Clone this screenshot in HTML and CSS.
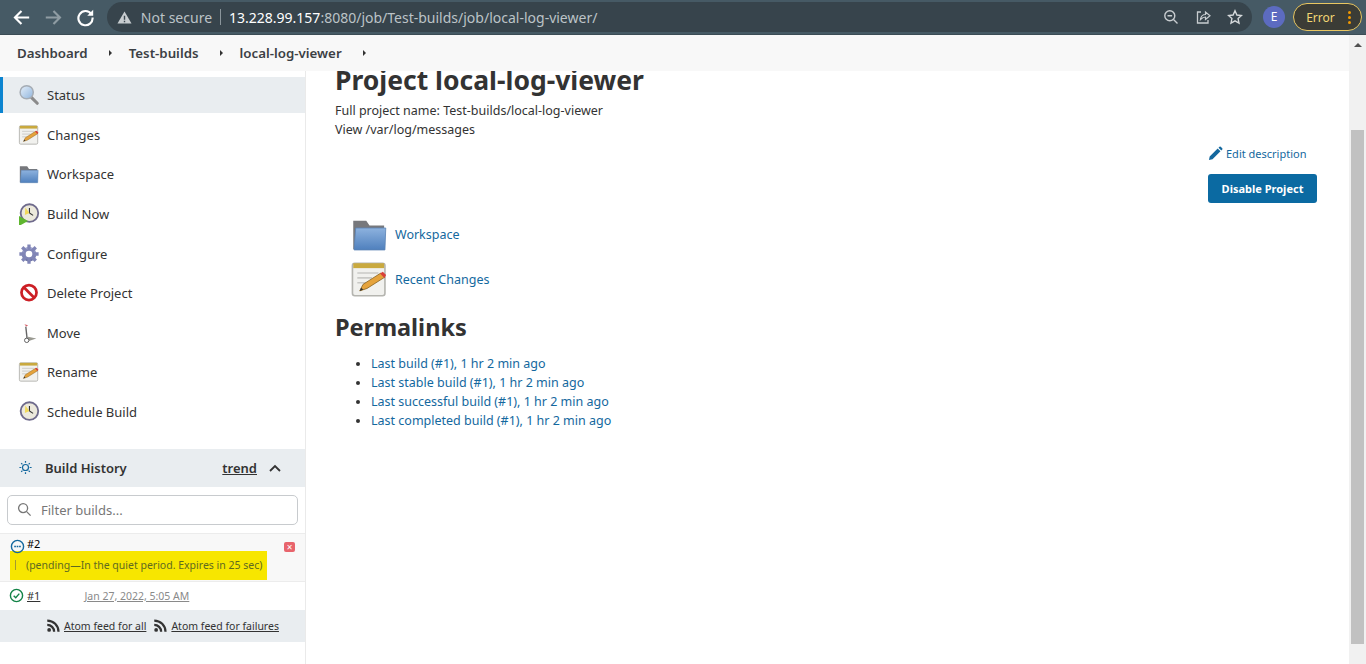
FILE: index.html
```html
<!DOCTYPE html>
<html lang="en">
<head>
    <meta charset="UTF-8">
    <meta name="viewport" content="width=device-width, initial-scale=1.0">
    <title>local-log-viewer [Jenkins]</title>
    <link rel="stylesheet" href="styles.css">
</head>
<body>
    <svg class="icon-defs" width="0" height="0">
        <defs>
            <linearGradient id="folderBlue" x1="0" y1="0" x2="0" y2="1"><stop offset="0" stop-color="#8db2de"/><stop offset="1" stop-color="#4f80bd"/></linearGradient>
            <linearGradient id="lensBlue" x1="0" y1="0" x2="1" y2="1"><stop offset="0" stop-color="#e6f0fa"/><stop offset="1" stop-color="#8fb4dc"/></linearGradient>
            <linearGradient id="gearBlue" x1="0" y1="0" x2="0" y2="1"><stop offset="0" stop-color="#a9add6"/><stop offset="1" stop-color="#676d9f"/></linearGradient>
            <symbol id="i-search" viewBox="0 0 24 24">
                <path d="M14 14l7 7" stroke="#8b8b8b" stroke-width="3.4" stroke-linecap="round"/>
                <circle cx="9.5" cy="9" r="7.2" fill="url(#lensBlue)" stroke="#a5acb4" stroke-width="1.6"/>
            </symbol>
            <symbol id="i-notepad" viewBox="0 0 24 24">
                <rect x="1.5" y="2" width="20" height="20" rx="1.5" fill="#f1f1ee" stroke="#b5b5b0"/>
                <rect x="2" y="2" width="19" height="3" fill="#c9a93e"/>
                <path d="M4.5 8h13M4.5 11h9M4.5 14h6" stroke="#c9c9c6"/>
                <path d="M6 19l2-4 11-7 2.500 2.500-11 7z" fill="#e5a33c" stroke="#8a6420" stroke-width=".5"/>
                <path d="M18.500 8.300l1.700-1 2 2-1 1.700z" fill="#d8403a"/>
                <path d="M6 19l.8-2 1.400 1.100z" fill="#333"/>
            </symbol>
            <symbol id="i-folder" viewBox="0 0 24 24">
                <path d="M2 21V3.500h8l2 3h9V21z" fill="#77787c"/>
                <path d="M2.500 21.500l1-13.500H22l-.5 13.500z" fill="url(#folderBlue)" stroke="#5b83b4" stroke-width=".5"/>
            </symbol>
            <symbol id="i-clock" viewBox="0 0 24 24">
                <circle cx="12.500" cy="11" r="9.600" fill="#ece9dc" stroke="#6f6b8c" stroke-width="2"/>
                <path d="M12.500 11V5.500M12.500 11l4 2.500" stroke="#333" stroke-width="1.200" fill="none"/>
                <path d="M8 5l4.500 6-5 2z" fill="#f0d85a"/>
            </symbol>
            <symbol id="i-gear" viewBox="0 0 24 24">
                <path d="M12 4.200a8 8 0 1 0 .01 0z" fill="url(#gearBlue)"/>
                <path d="M12 1.500v21M1.500 12h21M4.600 4.600l14.800 14.800M19.400 4.600L4.600 19.400" stroke="#8085b6" stroke-width="3.600"/>
                <circle cx="12" cy="12" r="3.600" fill="#fff"/>
            </symbol>
            <symbol id="i-noentry" viewBox="0 0 24 24">
                <circle cx="12" cy="11.500" r="8.200" fill="#fff" stroke="#cc1f25" stroke-width="3"/>
                <path d="M6.300 5.800l11.400 11.400" stroke="#cc1f25" stroke-width="3"/>
            </symbol>
            <symbol id="i-move" viewBox="0 0 24 24">
                <path d="M8.500 5l1.500 14" stroke="#666" stroke-width="1.500"/>
                <path d="M7 2.500l2 2.500 2-1.500z" fill="#d8606a"/>
                <path d="M11 16l9 2-9 3z" fill="#9a9a92"/>
                <circle cx="9.500" cy="20" r="2.400" fill="#fff" stroke="#555"/>
            </symbol>
            <symbol id="i-rss" viewBox="0 0 24 24">
                <circle cx="5" cy="19" r="3" fill="#333"/>
                <path d="M2 11a11 11 0 0 1 11 11M2 4a18 18 0 0 1 18 18" fill="none" stroke="#333" stroke-width="3.600"/>
            </symbol>
        </defs>
    </svg>

    <header class="browser-bar">
        <svg class="nav-icon" viewBox="0 0 16 16"><path d="M14.500 8H2.500M8 2.500L2.500 8 8 13.500" fill="none" stroke="#fff" stroke-width="1.800"/></svg>
        <svg class="nav-icon" viewBox="0 0 16 16"><path d="M1.500 8h12M8 2.500L13.500 8 8 13.500" fill="none" stroke="#8f9ca3" stroke-width="1.800"/></svg>
        <svg class="nav-icon" viewBox="0 0 16 16"><path d="M13 5.200A6 6 0 1 0 14 8" fill="none" stroke="#fff" stroke-width="1.800"/><path d="M14.500 1.500v5h-5z" fill="#fff"/></svg>
        <div class="omnibox">
            <svg class="warn-icon" viewBox="0 0 16 16"><path d="M8 1.500L15.500 14.500H.5z" fill="#c8cdd0"/><path d="M8 6v4.500M8 11.500v1.500" stroke="#3a474e" stroke-width="1.500"/></svg>
            <span class="not-secure">Not secure</span>
            <span class="omni-sep"></span>
            <span class="url"><b>13.228.99.157</b>:8080/job/Test-builds/job/local-log-viewer/</span>
            <span class="omni-actions">
                <svg class="omni-icon" viewBox="0 0 16 16"><circle cx="6.800" cy="6.800" r="5" fill="none" stroke="#c8cdd0" stroke-width="1.400"/><path d="M4.500 6.800h4.600M10.500 10.500l4 4" stroke="#c8cdd0" stroke-width="1.400"/></svg>
                <svg class="omni-icon" viewBox="0 0 16 16"><path d="M6 3H2.500v11h10.500v-3" fill="none" stroke="#c8cdd0" stroke-width="1.300"/><path d="M5.500 10.500C6 7 8 5.500 10.500 5.500V3L15 6.800l-4.500 3.700V8C8.500 8 7 9 5.500 10.500z" fill="none" stroke="#c8cdd0" stroke-width="1.200"/></svg>
                <svg class="omni-icon" viewBox="0 0 16 16"><path d="M8 1.800l1.900 4.200 4.600.5-3.400 3.100.9 4.500-4-2.300-4 2.300.9-4.500L1.500 6.500l4.600-.5z" fill="none" stroke="#d5d9db" stroke-width="1.400"/></svg>
            </span>
        </div>
        <span class="avatar">E</span>
        <span class="error-pill">Error<span class="kebab"><i></i><i></i><i></i></span></span>
    </header>

    <div class="page">
        <div class="page-main">
            <nav class="breadcrumbs">
                <a class="crumb">Dashboard</a><span class="crumb-arrow"></span>
                <a class="crumb">Test-builds</a><span class="crumb-arrow"></span>
                <a class="crumb">local-log-viewer</a><span class="crumb-arrow"></span>
            </nav>
            <div class="columns">
                <aside class="sidebar">
                    <ul class="tasks">
                        <li class="task active"><svg class="task-icon"><use href="#i-search"/></svg>Status</li>
                        <li class="task"><svg class="task-icon"><use href="#i-notepad"/></svg>Changes</li>
                        <li class="task"><svg class="task-icon"><use href="#i-folder"/></svg>Workspace</li>
                        <li class="task"><svg class="task-icon"><use href="#i-clock"/><path d="M1 23V13l9 5z" fill="#5fb62f"/></svg>Build Now</li>
                        <li class="task"><svg class="task-icon"><use href="#i-gear"/></svg>Configure</li>
                        <li class="task"><svg class="task-icon"><use href="#i-noentry"/></svg>Delete Project</li>
                        <li class="task"><svg class="task-icon"><use href="#i-move"/></svg>Move</li>
                        <li class="task"><svg class="task-icon"><use href="#i-notepad"/></svg>Rename</li>
                        <li class="task"><svg class="task-icon"><use href="#i-clock"/></svg>Schedule Build</li>
                    </ul>
                    <section class="history">
                        <div class="history-head">
                            <svg class="sun-icon" viewBox="0 0 16 16"><circle cx="8" cy="8" r="3.200" fill="none" stroke="#14689e" stroke-width="1.300"/><path d="M8 1v2M8 13v2M1.500 8h2M12.500 8h2M3.400 3.400l1.300 1.300M11.300 11.300l1.300 1.300M12.600 3.400l-1.300 1.300M4.700 11.300l-1.300 1.300" stroke="#14689e" stroke-width="1.300"/></svg>
                            <span class="history-title">Build History</span>
                            <a class="trend">trend</a>
                            <svg class="chevron" viewBox="0 0 14 14"><path d="M2 10l5-5 5 5" fill="none" stroke="#333" stroke-width="1.800"/></svg>
                        </div>
                        <div class="filter">
                            <svg class="filter-icon" viewBox="0 0 16 16"><circle cx="6.500" cy="6.500" r="4.800" fill="none" stroke="#777" stroke-width="1.400"/><path d="M10 10l4.500 4.500" stroke="#777" stroke-width="1.400"/></svg>
                            <span>Filter builds...</span>
                        </div>
                        <div class="build pending">
                            <div class="build-top">
                                <svg class="status-icon" viewBox="0 0 16 16"><circle cx="8" cy="8" r="6.500" fill="none" stroke="#14689e" stroke-width="1.500"/><path d="M4.500 8h7" stroke="#14689e" stroke-width="1.800" stroke-dasharray="1.800 .8"/></svg>
                                <span class="build-no">#2</span>
                                <span class="cancel">&#215;</span>
                            </div>
                            <div class="pending-note"><span class="caret"></span>(pending—In the quiet period. Expires in 25 sec)</div>
                        </div>
                        <div class="build done">
                            <svg class="status-icon" viewBox="0 0 16 16"><circle cx="8" cy="8" r="6.500" fill="none" stroke="#138347" stroke-width="1.500"/><path d="M5 8.200l2.200 2.200L11 6" fill="none" stroke="#138347" stroke-width="1.500"/></svg>
                            <a class="build-link">#1</a>
                            <a class="build-date">Jan 27, 2022, 5:05 AM</a>
                        </div>
                        <div class="feeds">
                            <svg class="rss"><use href="#i-rss"/></svg><a>Atom feed for all</a>
                            <svg class="rss"><use href="#i-rss"/></svg><a>Atom feed for failures</a>
                        </div>
                    </section>
                </aside>
                <main class="content">
                    <h1 class="project-title">Project local-log-viewer</h1>
                    <p class="full-name">Full project name: Test-builds/local-log-viewer</p>
                    <p class="description">View /var/log/messages</p>
                    <div class="actions">
                        <a class="edit-link">
                            <svg class="pencil" viewBox="0 0 16 16"><path d="M1 15l.8-3.800 8.500-8.500 3 3-8.500 8.500zM11.200 1.800l1-1a1 1 0 0 1 1.400 0l1.600 1.600a1 1 0 0 1 0 1.400l-1 1z" fill="#14689e"/></svg>
                            Edit description
                        </a>
                        <button class="disable-btn">Disable Project</button>
                    </div>
                    <div class="main-links">
                        <a class="main-link"><svg class="main-icon"><use href="#i-folder"/></svg>Workspace</a>
                        <a class="main-link"><svg class="main-icon"><use href="#i-notepad"/></svg>Recent Changes</a>
                    </div>
                    <h2 class="permalinks-title">Permalinks</h2>
                    <ul class="permalinks">
                        <li><a>Last build (#1), 1 hr 2 min ago</a></li>
                        <li><a>Last stable build (#1), 1 hr 2 min ago</a></li>
                        <li><a>Last successful build (#1), 1 hr 2 min ago</a></li>
                        <li><a>Last completed build (#1), 1 hr 2 min ago</a></li>
                    </ul>
                </main>
            </div>
        </div>
        <div class="scrollbar">
            <span class="scroll-up"></span>
            <span class="scroll-thumb"></span>
        </div>
    </div>
</body>
</html>
```

FILE: styles.css
```css
* {
    box-sizing: border-box;
}
html, body {
    height: 100%;
}
body {
    margin: 0;
    display: flex;
    flex-direction: column;
    overflow: hidden;
    font-family: "Noto Sans", "Open Sans", sans-serif;
    font-size: 13px;
    color: #333;
    background: #fff;
}
ul {
    margin: 0;
    padding: 0;
    list-style: none;
}
.icon-defs {
    position: absolute;
}

/* browser toolbar */
.browser-bar {
    height: 35px;
    flex: none;
    display: flex;
    align-items: center;
    gap: 0;
    padding: 0 4px 0 12px;
    background: #465a65;
    border-bottom: 1px solid #3b4c55;
}
.nav-icon {
    width: 19px;
    height: 19px;
    margin-right: 13px;
}
.omnibox {
    width: 1148px;
    height: 30px;
    margin: 0 0 0 -1px;
    padding: 0 0 0 10px;
    display: flex;
    align-items: center;
    border-radius: 15px;
    background: #37444c;
    color: #c8cdd0;
    font-size: 14px;
}
.warn-icon {
    width: 15px;
    height: 15px;
    margin-right: 9px;
}
.not-secure {
    color: #bcc3c7;
}
.omni-sep {
    width: 1px;
    height: 16px;
    margin: 0 8px;
    background: #8a959b;
}
.url {
    font-size: 14px;
    color: #bcc3c7;
}
.url b {
    font-weight: 400;
    color: #fff;
}
.omni-actions {
    margin-left: auto;
    display: flex;
    gap: 16px;
    padding-right: 9px;
}
.omni-icon {
    width: 16px;
    height: 16px;
}
.avatar {
    width: 22px;
    height: 22px;
    margin-left: 11px;
    border-radius: 50%;
    background: #5c6bc0;
    color: #fff;
    font-size: 12px;
    text-align: center;
    line-height: 22px;
}
.error-pill {
    width: 69px;
    height: 28px;
    margin-left: 8px;
    padding-left: 12px;
    display: flex;
    align-items: center;
    border: 1px solid #e8c661;
    border-radius: 14px;
    background: #3b3c36;
    color: #f3d675;
    font-size: 12px;
}
.kebab {
    margin-left: 13px;
    display: flex;
    flex-direction: column;
    gap: 2px;
}
.kebab i {
    width: 3px;
    height: 3px;
    border-radius: 50%;
    background: #f29900;
}

/* page */
.page {
    flex: 1;
    display: flex;
    min-height: 0;
}
.page-main {
    flex: 1;
    min-width: 0;
    display: flex;
    flex-direction: column;
}
.breadcrumbs {
    height: 36px;
    flex: none;
    padding-left: 17px;
    display: flex;
    align-items: center;
    background: #f8f8f8;
}
.crumb {
    font-size: 13.300px;
    font-weight: 600;
    color: #3c4044;
}
.crumb-arrow {
    width: 0;
    height: 0;
    margin: 0 17px 0 21px;
    border-left: 3px solid #333;
    border-top: 3px solid transparent;
    border-bottom: 3px solid transparent;
}
.columns {
    flex: 1;
    display: flex;
    min-height: 0;
    overflow: hidden;
}

/* side panel */
.sidebar {
    width: 306px;
    flex: none;
    padding-top: 6px;
    border-right: 1px solid #eaeaea;
}
.tasks {
    margin-bottom: 17px;
}
.task {
    height: 39.600px;
    padding-left: 18px;
    display: flex;
    align-items: center;
    color: #333;
    font-size: 13px;
}
.task.active {
    height: 36px;
    margin-bottom: 2px;
    padding-left: 18px;
    background: #e9edf0;
    border-left: 3px solid #0b84d0;
    padding-left: 15px;
}
.task-icon {
    width: 22px;
    height: 22px;
    margin-right: 7px;
    flex: none;
}
.history-head {
    height: 38px;
    padding: 0 23px 0 18px;
    display: flex;
    align-items: center;
    background: #e9edf0;
}
.sun-icon {
    width: 15px;
    height: 15px;
    margin-right: 12px;
}
.history-title {
    font-weight: 600;
    color: #333;
}
.trend {
    margin-left: auto;
    margin-right: 11px;
    font-weight: 600;
    text-decoration: underline;
}
.chevron {
    width: 14px;
    height: 14px;
}
.filter {
    height: 30px;
    margin: 8px 7px 8px;
    padding-left: 9px;
    display: flex;
    align-items: center;
    gap: 10px;
    border: 1px solid #c8cbce;
    border-radius: 5px;
    color: #777;
    font-size: 13px;
}
.filter-icon {
    width: 15px;
    height: 15px;
    flex: none;
    margin-right: -1px;
}
.build.pending {
    height: 49px;
    padding: 0 0 0 10px;
    background: #f8f8f8;
    border-top: 1px solid #ececec;
    border-bottom: 1px solid #ececec;
}
.build-top {
    height: 17px;
    display: flex;
    align-items: flex-start;
    padding-right: 10px;
    padding-top: 4px;
    color: #000;
    font-size: 11px;
    line-height: 12px;
}
.status-icon {
    width: 15px;
    height: 15px;
    flex: none;
}
.build-top .status-icon {
    margin-top: 1px;
}
.build-no {
    margin-left: 2px;
}
.cancel {
    margin-left: auto;
    width: 11px;
    height: 10px;
    margin-top: 4px;
    border-radius: 2px;
    background: #e8646c;
    color: #fff;
    font-size: 10px;
    line-height: 10px;
    text-align: center;
}
.pending-note {
    width: 257px;
    height: 29px;
    padding-left: 5px;
    display: flex;
    align-items: center;
    background: #f7e600;
    color: #5f6a20;
    font-size: 10.500px;
}
.caret {
    width: 1px;
    height: 10px;
    margin-right: 10px;
    background: #a39a30;
}
.build.done {
    height: 28px;
    padding-left: 9px;
    display: flex;
    align-items: center;
    font-size: 11px;
}
.build-link {
    margin-left: 3px;
    text-decoration: underline;
    color: #333;
}
.build-date {
    margin-left: 44px;
    text-decoration: underline;
    color: #8a8a8a;
    font-size: 10.500px;
}
.feeds {
    height: 32px;
    padding-left: 46px;
    display: flex;
    align-items: center;
    background: #e9edf0;
    font-size: 10.500px;
}
.feeds a {
    text-decoration: underline;
    color: #333;
    margin-right: 7px;
}
.rss {
    width: 15px;
    height: 15px;
    margin-right: 3px;
    flex: none;
}

/* main column */
.content {
    flex: 1;
    min-width: 0;
    padding: 0 32px 0 29px;
}
.project-title {
    margin: -9px 0 3px;
    font-size: 26.500px;
    font-weight: 700;
    line-height: 36px;
    color: #333;
}
.full-name, .description {
    margin: 0;
    line-height: 19px;
    font-size: 12.500px;
    color: #333;
}
.actions {
    display: flex;
    flex-direction: column;
    align-items: flex-end;
    margin-top: 5px;
}
.edit-link {
    width: 109px;
    display: flex;
    align-items: center;
    gap: 3px;
    margin-bottom: 11px;
    color: #14689e;
    font-size: 11px;
    line-height: 19px;
}
.pencil {
    width: 15px;
    height: 15px;
}
.disable-btn {
    width: 109px;
    height: 29px;
    padding: 0;
    border: none;
    border-radius: 3px;
    background: #0b6aa2;
    color: #fff;
    font-family: inherit;
    font-size: 11px;
    font-weight: 700;
}
.main-links {
    margin: 11px 0 0 15px;
    display: flex;
    flex-direction: column;
    gap: 4px;
}
.main-link {
    display: flex;
    align-items: center;
    gap: 6px;
    color: #14689e;
    font-size: 12.500px;
}
.main-icon {
    width: 39px;
    height: 41px;
    flex: none;
}
.permalinks-title {
    margin: 11px 0 11px;
    font-size: 23.500px;
    font-weight: 700;
    line-height: 32px;
    color: #333;
}
.permalinks {
    padding-left: 36px;
    list-style: disc;
    font-size: 12.500px;
    line-height: 19px;
}
.permalinks a {
    color: #14689e;
}

/* scrollbar */
.scrollbar {
    width: 17px;
    flex: none;
    padding-top: 8px;
    display: flex;
    flex-direction: column;
    align-items: center;
    background: #f1f1f1;
}
.scroll-up {
    width: 0;
    height: 0;
    border-left: 4px solid transparent;
    border-right: 4px solid transparent;
    border-bottom: 4px solid #505050;
}
.scroll-thumb {
    width: 13px;
    height: 514px;
    margin-top: 83px;
    background: #c1c1c1;
}
```
